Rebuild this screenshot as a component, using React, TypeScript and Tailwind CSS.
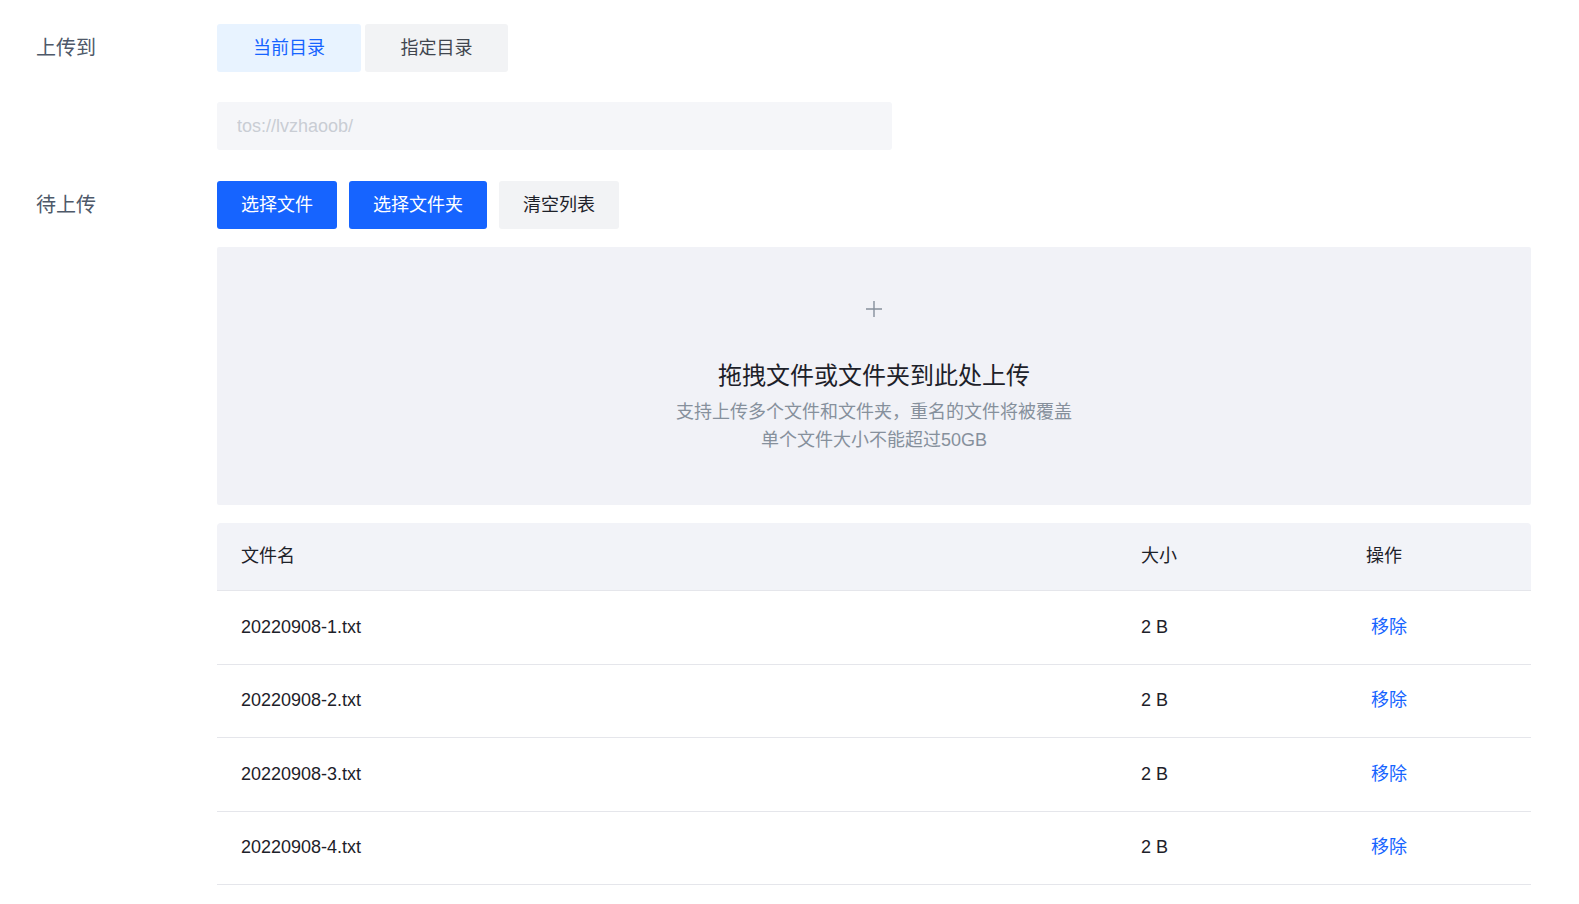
const FONT = { fontFamily: '"Liberation Sans", "Noto Sans CJK SC", sans-serif' };

interface FileRow {
  name: string;
  size: string;
}

const files: FileRow[] = [
  { name: "20220908-1.txt", size: "2 B" },
  { name: "20220908-2.txt", size: "2 B" },
  { name: "20220908-3.txt", size: "2 B" },
  { name: "20220908-4.txt", size: "2 B" },
];

function Label({ children }: { children: React.ReactNode }) {
  return (
    <div className="pl-[36px] text-[20px] leading-[28px] text-[#4e5969]">{children}</div>
  );
}

export default function App() {
  return (
    <div className="min-h-screen bg-white pt-[24px] pr-[48px]" style={FONT}>
      <div className="grid grid-cols-[217px_1fr]">
        {/* 上传到 */}
        <div className="flex h-[48px] items-center">
          <Label>上传到</Label>
        </div>
        <div className="flex gap-[4px]">
          <button className="h-[48px] w-[144px] rounded-[3px] bg-[#e8f3ff] text-[18px] text-[#1664ff]">
            当前目录
          </button>
          <button className="h-[48px] w-[143px] rounded-[3px] bg-[#f2f3f5] text-[18px] text-[#41464f]">
            指定目录
          </button>
        </div>

        <div />
        <div className="mt-[30px]">
          <input
            readOnly
            placeholder="tos://lvzhaoob/"
            className="h-[48px] w-[675px] rounded-[3px] bg-[#f5f6f9] px-[20px] text-[18px] text-[#1d2129] outline-none placeholder:text-[#c9cdd4]"
          />
        </div>

        {/* 待上传 */}
        <div className="mt-[31px] flex h-[48px] items-center">
          <Label>待上传</Label>
        </div>
        <div className="mt-[31px] flex flex-col">
          <div className="flex gap-[12px]">
            <button className="h-[48px] w-[120px] rounded-[3px] bg-[#1664ff] text-[18px] text-white">
              选择文件
            </button>
            <button className="h-[48px] w-[138px] rounded-[3px] bg-[#1664ff] text-[18px] text-white">
              选择文件夹
            </button>
            <button className="h-[48px] w-[120px] rounded-[3px] bg-[#f2f3f5] text-[18px] text-[#1d2129]">
              清空列表
            </button>
          </div>

          {/* drop zone */}
          <div className="mt-[18px] flex h-[258px] flex-col items-center rounded-[2px] bg-[#f1f2f7] pt-[53px]">
            <svg width="18" height="18" viewBox="0 0 18 18" className="block">
              <path d="M9 1v16M1 9h16" stroke="#86909c" strokeWidth="1.4" fill="none" />
            </svg>
            <div className="mt-[42px] text-[24px] leading-[32px] text-[#1d2129]">
              拖拽文件或文件夹到此处上传
            </div>
            <div className="mt-[6px] text-center text-[18px] leading-[28px] text-[#86909c]">
              <div>支持上传多个文件和文件夹，重名的文件将被覆盖</div>
              <div>单个文件大小不能超过50GB</div>
            </div>
          </div>

          {/* table */}
          <div className="mt-[18px]">
            <div className="grid h-[68px] grid-cols-[900px_225px_1fr] items-center rounded-t-[4px] border-b border-[#e5e6eb] bg-[#f2f3f8] text-[18px] text-[#1d2129]">
              <div className="pl-[24px]">文件名</div>
              <div className="pl-[24px]">大小</div>
              <div className="pl-[24px]">操作</div>
            </div>
            {files.map((f) => (
              <div
                key={f.name}
                className="grid h-[73.5px] grid-cols-[900px_225px_1fr] items-center border-b border-[#e5e6eb] text-[18px] text-[#1d2129]"
              >
                <div className="pl-[24px]">{f.name}</div>
                <div className="pl-[24px]">{f.size}</div>
                <div className="pl-[29px]">
                  <button className="text-[18px] text-[#1664ff]">移除</button>
                </div>
              </div>
            ))}
          </div>
        </div>
      </div>
    </div>
  );
}
